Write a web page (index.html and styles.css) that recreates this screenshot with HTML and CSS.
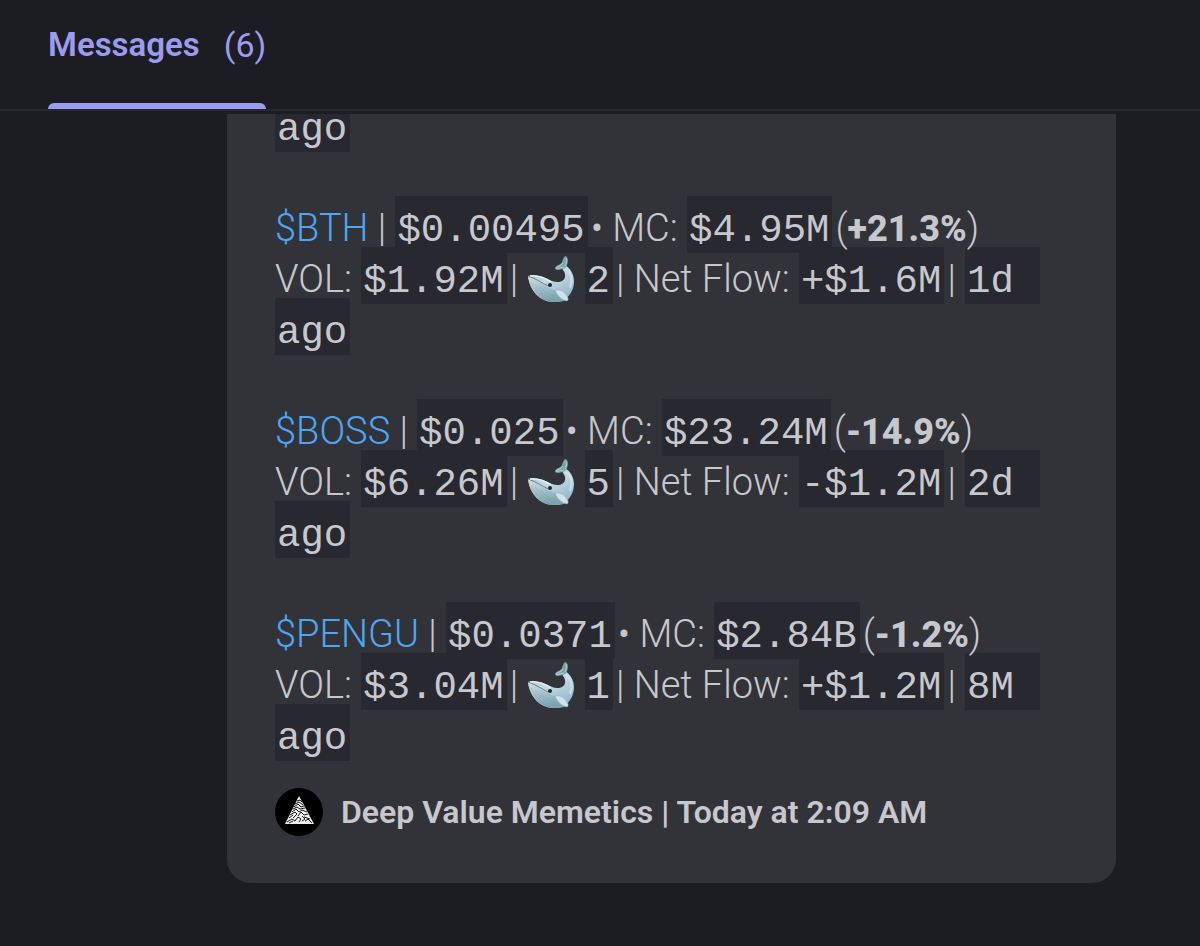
FILE: index.html
```
<!DOCTYPE html>
<html lang="en">
<head>
    <meta charset="UTF-8">
    <meta name="viewport" content="width=device-width, initial-scale=1.0">
    <title>Messages</title>
    <link rel="stylesheet" href="styles.css">
</head>
<body>

<!-- Shared icons -->
<svg class="sprite" aria-hidden="true">
    <defs>
        <linearGradient id="whale-body" x1="0" y1="0" x2="0.6" y2="1">
            <stop offset="0" stop-color="#a9c6d0"/>
            <stop offset="0.5" stop-color="#c3dae4"/>
            <stop offset="1" stop-color="#94b7cb"/>
        </linearGradient>
        <linearGradient id="whale-belly" x1="0" y1="0" x2="0.4" y2="1">
            <stop offset="0" stop-color="#d3dfe3"/>
            <stop offset="1" stop-color="#7da4b2"/>
        </linearGradient>
    </defs>
    <symbol id="whale" viewBox="0 0 48 48">
        <path d="M1 21C8 19 17 22 25 26C31 28 37 27 38 22C39 18 36 15 34 12L38 10C43 13 47 19 47 26C47 37 40 47 27 47C13 47 3 36 1 21Z" fill="url(#whale-body)"/>
        <path d="M1 21C7 24 14 28 20 32C25 34 29 35 31 38L38 45C36 47 31 47 27 47C13 47 3 36 1 21Z" fill="url(#whale-belly)"/>
        <path d="M4 27C8 36 15 42 23 46M8 29C12 36 19 42 28 45M13 32C17 37 22 40 29 42" fill="none" stroke="#6f98a8" stroke-width="0.600" opacity="0.600"/>
        <path d="M1 21C8 23 15 28 21 31" fill="none" stroke="#617d88" stroke-width="1"/>
        <path d="M3 21C11 20 18 23 24 27" fill="none" stroke="#e4eff3" stroke-width="1.500"/>
        <path d="M38 13C31 16 28 15 28 13C29 10 34 10 35 7C36 4 37 1 39 1C42 4 41 9 39 12Z" fill="#79a5a9"/>
        <path d="M37 12C32 13 30 14 29 13C31 11 34 11 36 8M39 3C40 6 39 9 38 11" fill="none" stroke="#b3d3d3" stroke-width="1"/>
        <path d="M39 14C45 18 46 26 43 33" fill="none" stroke="#d9eaf2" stroke-width="2" opacity="0.700"/>
        <circle cx="23" cy="30" r="2" fill="#1e272d"/>
        <path d="M28 35C33 34 37 36 40 41C41 43 42 45 40 46C35 45 30 41 28 35Z" fill="#d0e3ed" stroke="#84a8bb" stroke-width="0.600"/>
    </symbol>
</svg>

<header class="tabs">
    <a class="tab" href="#messages">
        <span class="tab-name">Messages</span>
        <span class="tab-count">(6)</span>
    </a>
</header>

<main class="chat" id="messages">
    <article class="embed">
        <p class="token"><code>ago</code></p>

        <p class="token">
            <a href="#bth">$BTH</a> | <code>$0.00495</code>• MC: <code>$4.95M</code>(<strong>+21.3%</strong>)<br>
            VOL: <code>$1.92M</code>| <svg class="whale" role="img" aria-label="whales"><use href="#whale"/></svg> <code>2</code>| Net Flow: <code>+$1.6M</code>| <code>1d 
ago</code>
        </p>

        <p class="token">
            <a href="#boss">$BOSS</a> | <code>$0.025</code>• MC: <code>$23.24M</code>(<strong>-14.9%</strong>)<br>
            VOL: <code>$6.26M</code>| <svg class="whale" role="img" aria-label="whales"><use href="#whale"/></svg> <code>5</code>| Net Flow: <code>-$1.2M</code>| <code>2d 
ago</code>
        </p>

        <p class="token">
            <a href="#pengu">$PENGU</a> | <code>$0.0371</code>• MC: <code>$2.84B</code>(<strong>-1.2%</strong>)<br>
            VOL: <code>$3.04M</code>| <svg class="whale" role="img" aria-label="whales"><use href="#whale"/></svg> <code>1</code>| Net Flow: <code>+$1.2M</code>| <code>8M 
ago</code>
        </p>

        <footer class="embed-footer">
            <svg class="avatar" viewBox="0 0 48 48" aria-hidden="true">
                <circle cx="24" cy="24" r="24" fill="#000"/>
                <path d="M24 8L39 36H10Z" fill="#eee"/>
                <g fill="none" stroke="#000" stroke-width="0.900">
                    <path d="M22 13L25 12L27 14M20 16L24 14L28 17M19 19L23 16L26 19L29 18"/>
                    <path d="M18 21L22 19L25 21L30 20M17 24L21 21L24 24L27 22L32 24"/>
                    <path d="M15 27L20 24L22 26L18 30M23 28L26 24L29 27L33 26M14 30L18 27"/>
                    <path d="M12 34L17 31L20 33L23 29L26 31L24 34M27 28L30 31L27 33M29 29L35 31M30 33L33 31L37 35M14 35L18 33"/>
                </g>
            </svg>
            <span>Deep Value Memetics | Today at 2:09 AM</span>
        </footer>
    </article>
</main>

</body>
</html>
```
FILE: styles.css
```
* {
    margin: 0;
    padding: 0;
    box-sizing: border-box;
}

body {
    min-height: 100vh;
    font-family: Roboto, "Liberation Sans", sans-serif;
    background-color: #1c1d22;
    color: #c7c8ce;
}

a {
    text-decoration: none;
}

.sprite {
    display: block;
    width: 0;
    height: 0;
}

/* Tab bar */
.tabs {
    display: flex;
    height: 111px;
    padding: 0 48px;
    border-bottom: 2px solid #26272d;
}

.tab {
    display: flex;
    gap: 24px;
    padding-top: 25px;
    font-size: 34px;
    line-height: 40px;
    color: #9b9cf0;
    position: relative;
}

.tab::after {
    content: "";
    position: absolute;
    left: 0;
    right: 0;
    bottom: 0;
    height: 6px;
    background-color: #9b9cf0;
    border-radius: 6px 6px 0 0;
}

.tab-name {
    font-size: 33px;
    font-weight: 600;
}

/* Message embed, scrolled under the tab bar */
.chat {
    padding: 3px 84px 63px 227px;
}

.embed {
    padding: 0 48px 47px;
    background-color: #323338;
    border-radius: 0 0 24px 24px;
    overflow: hidden;
    isolation: isolate;
}

.token {
    margin-bottom: 50px;
    font-size: 38px;
    font-weight: 300;
    line-height: 51px;
    white-space: nowrap;
}

.token:first-child {
    margin-top: -12px;
}

.token a {
    color: #4ea6f2;
}

.token strong {
    font-size: 36px;
    font-weight: 800;
    line-height: 1;
}

/* code backgrounds are taller than the line, keep them under the text */
.token code {
    position: relative;
    z-index: -1;
    margin-right: 3px;
    padding: 13px 3px 0 2px;
    font-family: "Liberation Mono", monospace;
    font-size: 39px;
    line-height: 1;
    white-space: pre;
    background-color: #282830;
    box-decoration-break: clone;
    -webkit-box-decoration-break: clone;
}

.whale {
    width: 48px;
    height: 48px;
    margin-top: -20px;
    vertical-align: -11px;
}

.embed-footer {
    display: flex;
    align-items: center;
    gap: 18px;
    margin-top: -24px;
    font-size: 32px;
    font-weight: 600;
    line-height: 48px;
}

.avatar {
    width: 48px;
    height: 48px;
    flex-shrink: 0;
}
```
